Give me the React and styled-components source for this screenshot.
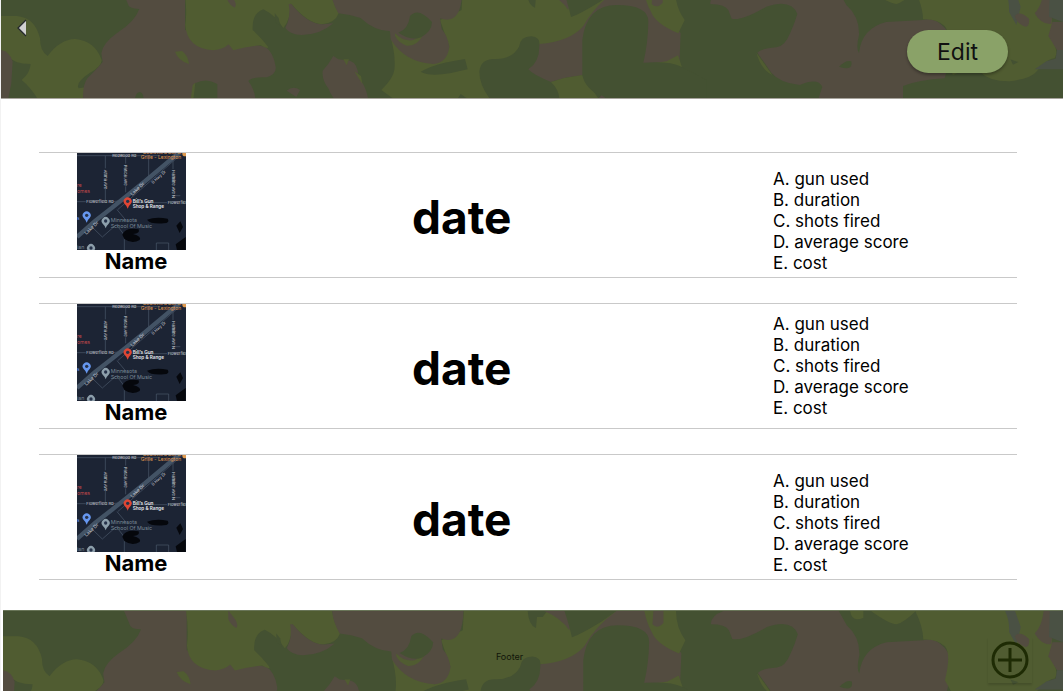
import React from "react";
import styled, { createGlobalStyle } from "styled-components";

const GlobalStyle = createGlobalStyle`
  *, *::before, *::after { box-sizing: border-box; }
  body {
    margin: 0;
    background: #ffffff;
    color: #000000;
    font-family: Inter, "Liberation Sans", sans-serif;
  }
`;

const GREEN = "#445132";
const OLIVE = "#505c31";
const BROWN = "#534c40";
const SLATE = "#4a5144";

const Page = styled.div`
  display: flex;
  flex-direction: column;
  min-height: 100vh;
  border-left: 1px solid #f2f2f2;
`;

const CamoSvg = styled.svg`
  position: absolute;
  inset: 0;
  width: 100%;
  height: 100%;
`;

const Header = styled.header`
  position: relative;
  display: flex;
  justify-content: space-between;
  align-items: flex-start;
  height: 99px;
  padding: 0 55px 0 12px;
  background: ${GREEN};
  border-bottom: 1px solid #a6a39c;
`;

const BackButton = styled.button`
  position: relative;
  display: flex;
  align-items: center;
  justify-content: center;
  width: 18px;
  height: 24px;
  margin-top: 16px;
  padding: 0;
  border: 0;
  background: none;
  cursor: pointer;
`;

const EditButton = styled.button`
  position: relative;
  width: 101px;
  height: 43px;
  margin-top: 30px;
  padding: 0;
  border: 0;
  border-radius: 22px;
  background: #8aa268;
  box-shadow: 0 2px 3px rgba(0, 0, 0, 0.3);
  color: #111111;
  font: 400 23px/44px Inter, "Liberation Sans", sans-serif;
  cursor: pointer;
`;

const Sessions = styled.main`
  display: flex;
  flex-direction: column;
  gap: 25px;
  padding: 53px 46px 30px 38px;
`;

const SessionRow = styled.article`
  display: grid;
  grid-template-columns: 373fr 361fr 244fr;
  align-items: center;
  height: 126px;
  border-top: 1px solid #c9c9c9;
  border-bottom: 1px solid #c9c9c9;
`;

const Place = styled.figure`
  display: flex;
  flex-direction: column;
  align-items: center;
  align-self: start;
  width: 109px;
  margin: 0 0 0 38px;
`;

const MapSvg = styled.svg`
  display: block;
  width: 109px;
  height: 97px;
`;

const PlaceName = styled.figcaption`
  padding-left: 9px;
  font-size: 22px;
  font-weight: 700;
  line-height: 23px;
`;

const SessionDate = styled.h2`
  margin: 0;
  padding-top: 4px;
  font-size: 46px;
  font-weight: 700;
  line-height: 56px;
`;

const Details = styled.ol`
  margin: 0;
  padding: ${({ $centered }) => ($centered ? "0" : "12px 0 0")};
  list-style: none;
  font-size: 17px;
  line-height: 21px;
`;

const Footer = styled.footer`
  position: relative;
  display: flex;
  flex: 1;
  align-items: flex-start;
  min-height: 81px;
  margin-left: 2px;
  padding: 26px 31px 0 28px;
  background: ${GREEN};
  border-top: 1px solid #697558;
`;

const FooterText = styled.span`
  position: relative;
  flex: 1;
  padding-top: 13px;
  color: #11150a;
  font-size: 9px;
  line-height: 14px;
  text-align: center;
`;

const AddButton = styled.button`
  position: relative;
  display: flex;
  align-items: center;
  justify-content: center;
  width: 44px;
  height: 46px;
  padding: 0;
  border: 0;
  background: none;
  box-shadow: 0 2px 2px rgba(0, 0, 0, 0.14);
  cursor: pointer;
`;

function Camo({ top }) {
  return (
    <CamoSvg viewBox={`3 ${top} 3186 294`} preserveAspectRatio="xMinYMin slice" aria-hidden="true">
      <rect x="0" y="-30" width="3400" height="500" fill={GREEN} />

      <g strokeLinejoin="round">
        <path fill={OLIVE} d="M0 48H50Q105 52 120 115Q120 155 143 168Q180 118 225 117Q285 122 305 180Q305 200 270 218Q225 248 236 265L256 262L248 300H115Q92 262 65 240Q90 220 92 192Q40 192 20 165L0 150Z" />
        <path fill={BROWN} d="M0 150Q28 152 38 185L34 250L24 300H0Z" />
        <path fill={BROWN} d="M366 -30L383 10Q385 27 418 27Q405 65 350 100Q308 130 304 160L308 186Q290 208 262 235Q246 260 250 300H572L585 250Q620 232 652 252V300H766Q765 270 745 243Q755 230 800 232Q830 222 827 200Q820 155 795 140L555 90V-30Z" />
        <path fill={GREEN} d="M405 295Q408 276 420 276Q432 280 430 300H405Z" />
        <path fill={OLIVE} d="M572 300L578 255L586 248L580 300Z" />
        <path fill={OLIVE} d="M525 155L546 153Q565 168 567 192Q535 182 525 155Z" />
        <path fill={OLIVE} d="M553 -30Q562 30 556 75Q560 145 640 151Q670 148 686 133L700 151Q740 140 782 136Q808 150 803 139Q785 115 758 90Q755 40 790 28Q825 45 850 84Q872 60 872 10Q925 72 965 73Q1005 70 1016 40Q995 0 992 -30Z" />
        <path fill={GREEN} d="M824 40L836 54L841 78L826 66Z" />
        <path fill={BROWN} d="M680 -30L700 -4Q712 14 704 23Q688 15 680 -5Z" />
        <path fill={BROWN} d="M874 12Q925 75 970 73L1000 70Q960 105 905 105Q870 104 856 84Q874 50 866 12Z" />
        <path fill={BROWN} d="M860 272Q880 255 900 270L889 291Z" />
        <path fill={BROWN} d="M1000 168L1015 178L1050 182Q1074 190 1075 230Q1100 262 1105 300H1005Q990 280 985 265Q965 240 968 212Q985 195 1000 168Z" />
        <path fill={OLIVE} d="M1030 178H1047L1040 196ZM1063 214L1083 228L1087 252Z" />
      </g>

      <g transform="translate(1050 0)">
        <path fill={OLIVE} d="M338 -30L335 30L270 60L298 140L250 192L122 112Q138 170 133 210Q130 235 94 270L135 300H422Q388 255 388 215Q392 178 430 177Q485 180 507 140Q512 108 545 109Q570 112 568 132H600Q700 120 720 55L800 -30Z" />
        <path fill={BROWN} d="M-58 -30Q-55 5 -35 40Q0 44 32 54Q72 92 120 94L122 118Q165 188 250 192Q292 188 298 140Q292 105 275 88L270 55Q335 78 337 -30Z" />
        <path fill={OLIVE} d="M135 100Q160 126 190 120L220 104Q200 140 170 137Q145 128 135 108Z" />
        <path fill={GREEN} d="M145 98Q175 88 180 48Q205 20 246 66Q245 95 213 112Q185 124 145 98Z" />
        <path fill={GREEN} d="M212 215Q255 190 345 177L353 208L300 220Q235 230 212 215ZM320 300L332 282L358 300Z" />
        <path fill={GREEN} d="M530 -30Q532 15 555 23L558 -10H575L590 -30Z" />
        <path fill={BROWN} d="M575 -30Q630 -8 655 30L665 -30Z" />
        <path fill={GREEN} d="M640 -30Q655 15 663 51Q690 42 750 5L800 -30Z" />
        <path fill={BROWN} d="M568 132Q660 125 700 78Q735 15 800 -30H905L992 100L988 195L700 226Q650 230 603 246Q550 225 535 208Q570 185 568 132Z" />
        <path fill={OLIVE} d="M880 -30Q890 15 903 35Q915 70 985 100L1004 60Q975 20 976 -30Z" />
        <path fill={BROWN} d="M908 -30L905 12Q920 28 938 8V-30Z" />
        <path fill={OLIVE} d="M603 246Q650 230 697 225L748 300H628Q628 270 603 246Z" />
        <path fill={OLIVE} d="M892 192L950 184L984 166L996 202H890Z" />
        <path fill={GREEN} d="M697 225V120Q710 15 800 15Q895 15 895 65Q894 130 880 188Q960 183 994 200L1070 240V300H772Q705 270 697 225Z" />
        <path fill={BROWN} d="M740 300L755 286L775 300Z" />
      </g>

      <g transform="translate(2109 0)">
        <path fill={BROWN} d="M65 -30Q20 -15 22 12Q65 12 76 30L86 56Q115 64 190 20Q265 -5 283 42Q275 70 262 98Q245 140 220 142Q175 145 163 158L205 218Q230 248 290 255Q345 232 358 260L345 300H600V258Q645 240 725 235L742 170L740 110Q730 85 715 74Q690 52 660 60L550 66Q475 85 468 160Q458 145 468 105Q470 50 430 15L405 -30Z" />
        <path fill={GREEN} d="M408 200Q430 178 445 184Q452 215 408 200Z" />
        <path fill={OLIVE} d="M160 158L208 225Q175 210 160 158Z" />
        <path fill={OLIVE} d="M440 -30Q445 8 480 -8V-30ZM500 -30Q555 10 580 12Q600 8 640 -30Z" />
        <path fill={OLIVE} d="M635 -30Q660 20 660 58Q700 55 725 78Q745 100 725 180L750 225Q790 205 830 215Q860 245 920 244Q985 235 1000 215Q1035 175 1055 175Q1070 150 1040 110Q1050 90 1048 72L1040 -30Z" />
        <path fill={SLATE} d="M905 -30Q920 0 918 35L940 75L953 20L935 -30Z" />
        <path fill={BROWN} d="M935 48Q950 30 978 56Q980 78 968 80Q942 72 935 48Z" />
        <path fill={BROWN} d="M1022 -30Q1018 15 995 40Q1015 75 1045 72L1055 -30Z" />
        <path fill={SLATE} d="M1040 -30L1038 50L1100 74V-30Z" />
        <path fill={BROWN} d="M1048 66H1100V150H1062L1036 108Z" />
        <path fill={SLATE} d="M1062 150H1100V208L995 208L1030 184L1058 176Z" />
        <path fill={GREEN} d="M922 178L946 186L930 194Z" />
      </g>
    </CamoSvg>
  );
}

function Pin({ x, y, color }) {
  return (
    <g transform={`translate(${x} ${y})`}>
      <path fill={color} d="M0 16Q-3 7-9 2A12 12 0 1 1 9 2Q3 7 0 16Z" />
      <circle cy="-6" r="5" fill="#26324a" />
    </g>
  );
}

function RangeMap() {
  return (
    <MapSvg
      viewBox="0 0 327 291"
      role="img"
      aria-label="Map of Bill's Gun Shop and Range"
      fontFamily="Inter, 'Liberation Sans', sans-serif"
      fontSize="14"
    >
      <rect width="327" height="291" fill="#1c2434" />
      <g fill="none" stroke="#4b596b" strokeWidth="2">
        <path d="M0 8H250M85 8V46M85 108V144M146 8V32M146 100V118M215 8V82M288 22V48M0 146H26M108 146Q135 145 150 124L300 0M180 149H270M288 128H310M120 170L152 208M45 222L76 252L118 215L142 246V291M238 291V270H275V291" />
        <path d="M122 170L326 -8" />
      </g>
      <path d="M0 252Q50 204 105 164L205 84L305 0" fill="none" stroke="#435365" strokeWidth="13" />
      <g fill="#05070c">
        <path d="M210 200Q235 191 272 197Q280 210 260 211Q220 214 210 200Z" />
        <path d="M136 245Q145 222 185 229Q190 242 168 243Q195 250 188 261Q165 274 142 258Z" />
        <path d="M298 218L310 205L318 222L308 240Z" />
        <path d="M296 274L326 252V291H300Z" />
      </g>
      <g fill="#d3d6dc" fontSize="12">
        <text x="106" y="11">Redwood Rd</text>
        <text x="28" y="151">Flowerfield Rd</text>
        <text x="272" y="153">Flowerfield</text>
        <text transform="translate(81 50) rotate(90)">Arona Ave</text>
        <text transform="translate(142 36) rotate(90)">Pascal Ave</text>
        <text transform="translate(284 52) rotate(90)">Hamline Ave N</text>
        <text transform="translate(166 128) rotate(-42)" fontSize="14">Lake Dr</text>
        <text transform="translate(28 245) rotate(-42)" fontSize="14">Lake Dr</text>
        <text transform="translate(228 93) rotate(-42)">S Hwy Dr</text>
      </g>
      <g fill="#e09a4f" fontSize="15">
        <text x="198" y="3">Boulevard Bar &amp;</text>
        <text x="191" y="19">Grille - Lexington</text>
        <circle cx="324" cy="2" r="8" />
      </g>
      <g fill="#c5484b" fontSize="15">
        <text x="0" y="103">re</text>
        <text x="0" y="120">omes</text>
      </g>
      <g fill="#e8eaee" fontWeight="600">
        <text x="167" y="150">Bill’s Gun</text>
        <text x="167" y="166">Shop &amp; Range</text>
      </g>
      <g fill="#788894" fontSize="16">
        <text x="101" y="208">Minnesota</text>
        <text x="101" y="225">School Of Music</text>
        <text x="0" y="288">ian</text>
      </g>
      <text x="0" y="200" fill="#6b9cf5">s</text>
      <Pin x={152} y={151} color="#df4634" />
      <Pin x={29} y={193} color="#6798f0" />
      <Pin x={86} y={210} color="#8d9fab" />
      <Pin x={42} y={291} color="#8d9fab" />
    </MapSvg>
  );
}

const details = ["A. gun used", "B. duration", "C. shots fired", "D. average score", "E. cost"];

const sessions = [
  { id: 1, centered: false },
  { id: 2, centered: true },
  { id: 3, centered: false },
];

export default function App() {
  return (
    <>
      <GlobalStyle />
      <Page>
        <Header>
          <Camo top={0} />
          <BackButton aria-label="Back">
            <svg width="10" height="18" viewBox="0 0 10 18" aria-hidden="true">
              <path d="M9 1L1 9L9 17Z" fill="#d0d0d0" />
              <path d="M9 1L1 9L9 17" fill="none" stroke="#25292d" strokeWidth="1.3" />
            </svg>
          </BackButton>
          <EditButton>Edit</EditButton>
        </Header>
        <Sessions>
          {sessions.map(({ id, centered }) => (
            <SessionRow key={id}>
              <Place>
                <RangeMap />
                <PlaceName>Name</PlaceName>
              </Place>
              <SessionDate>date</SessionDate>
              <Details $centered={centered}>
                {details.map((item) => (
                  <li key={item}>{item}</li>
                ))}
              </Details>
            </SessionRow>
          ))}
        </Sessions>
        <Footer>
          <Camo top={-28} />
          <FooterText>Footer</FooterText>
          <AddButton aria-label="Add session">
            <svg width="38" height="38" viewBox="0 0 38 38" fill="none" stroke="#1e2b04" strokeWidth="3" aria-hidden="true">
              <circle cx="19" cy="19" r="17" />
              <path d="M19 7V31M7 19H31" />
            </svg>
          </AddButton>
        </Footer>
      </Page>
    </>
  );
}
